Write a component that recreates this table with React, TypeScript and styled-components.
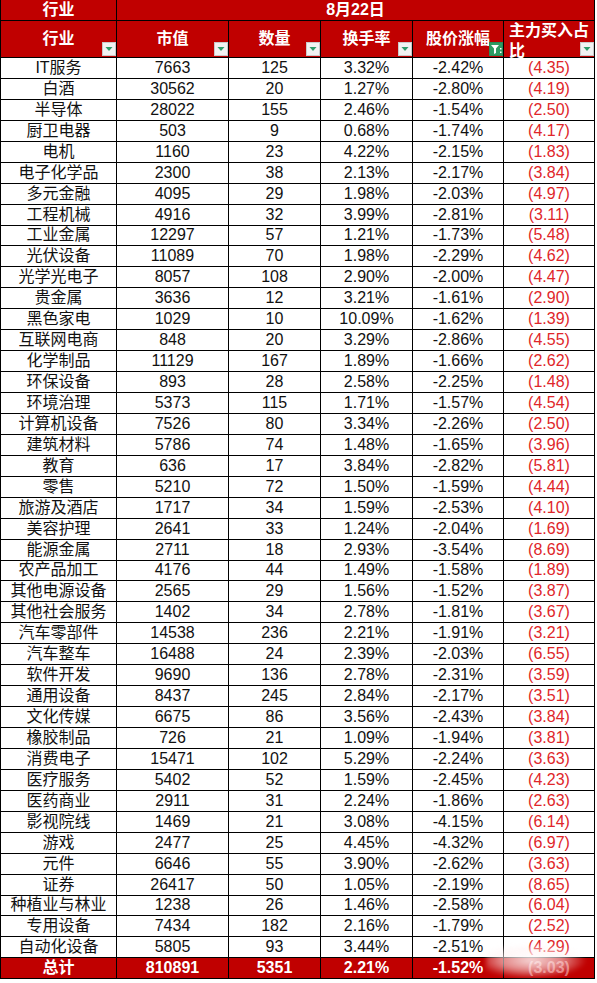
import React from "react";
import styled, { createGlobalStyle } from "styled-components";

const GlobalStyle = createGlobalStyle`
  html, body { margin: 0; padding: 0; background: #ffffff; }
  body { font-family: "Liberation Sans", "Noto Sans CJK SC", Arial, sans-serif; }
`;

const RED = "#c00000";

const Wrapper = styled.div`
  position: relative;
  width: 597px;
`;

const Sheet = styled.div`
  display: grid;
  grid-template-columns: 115px 111px 91px 91px 90px 90px;
  grid-template-rows: 20px 36px;
  grid-auto-rows: 19.95px;
  gap: 1px;
  padding: 0 1px 1px 1px;
  background: #000000;
  width: fit-content;
`;

const TitleCell = styled.div<{ $span?: number }>`
  grid-column: span ${(p) => p.$span ?? 1};
  background: ${RED};
  color: #ffffff;
  font-weight: bold;
  font-size: 16px;
  display: flex;
  align-items: center;
  justify-content: center;
  line-height: 1;
`;

const HeadCell = styled.div`
  position: relative;
  background: ${RED};
  color: #ffffff;
  font-weight: bold;
  font-size: 16px;
  display: flex;
  align-items: center;
  justify-content: center;
  padding-bottom: 2px;
  box-sizing: border-box;
`;

const HeadLabel = styled.span<{ $wrap?: boolean }>`
  display: block;
  line-height: ${(p) => (p.$wrap ? "20px" : "19px")};
  text-align: ${(p) => (p.$wrap ? "left" : "center")};
  align-self: ${(p) => (p.$wrap ? "flex-start" : "center")};
  width: ${(p) => (p.$wrap ? "100%" : "auto")};
  padding: ${(p) => (p.$wrap ? "0 4px 0 5px" : "0")};
  box-sizing: border-box;
`;

const FilterBtn = styled.span<{ $active?: boolean }>`
  position: absolute;
  right: 0;
  bottom: 1px;
  width: 14px;
  height: 14px;
  box-sizing: border-box;
  background: ${(p) => (p.$active ? "#2e9b63" : "#f2f2f2")};
  border: 1px solid ${(p) => (p.$active ? "#2a8a58" : "#c9c9c9")};
  display: flex;
  align-items: center;
  justify-content: center;
`;

const Cell = styled.div<{ $neg?: boolean }>`
  background: #ffffff;
  color: ${(p) => (p.$neg ? "#e0262a" : "#111111")};
  font-size: 16px;
  display: flex;
  align-items: center;
  justify-content: center;
  line-height: 1;
  white-space: nowrap;
`;

const TotalCell = styled.div<{ $faint?: boolean }>`
  background: ${RED};
  color: ${(p) => (p.$faint ? "rgba(255,200,200,0.55)" : "#ffffff")};
  font-weight: bold;
  font-size: 16px;
  display: flex;
  align-items: center;
  justify-content: center;
  line-height: 1;
  white-space: nowrap;
`;

const Watermark = styled.div`
  position: absolute;
  left: 486px;
  top: 946px;
  width: 100px;
  height: 32px;
  background: radial-gradient(
    ellipse at 45% 45%,
    rgba(255, 255, 255, 0.85) 0%,
    rgba(255, 240, 240, 0.55) 40%,
    rgba(255, 255, 255, 0) 72%
  );
  filter: blur(2px);
  pointer-events: none;
`;

const Arrow = () => (
  <svg width="10" height="8" viewBox="0 0 10 8">
    <polygon points="1.5,2 8.5,2 5,6" fill="#2e9c6a" />
  </svg>
);

const Funnel = () => (
  <svg width="12" height="12" viewBox="0 0 12 12">
    <path d="M1 2 H9 L6 5.5 V10 L4 11 V5.5 Z" fill="#ffffff" />
    <rect x="10" y="5" width="1.5" height="1.5" fill="#ffffff" />
    <rect x="10" y="8.5" width="1.5" height="1.5" fill="#ffffff" />
  </svg>
);

type Row = [string, number, number, string, string, string];

const rows: Row[] = [
  ["IT服务", 7663, 125, "3.32%", "-2.42%", "(4.35)"],
  ["白酒", 30562, 20, "1.27%", "-2.80%", "(4.19)"],
  ["半导体", 28022, 155, "2.46%", "-1.54%", "(2.50)"],
  ["厨卫电器", 503, 9, "0.68%", "-1.74%", "(4.17)"],
  ["电机", 1160, 23, "4.22%", "-2.15%", "(1.83)"],
  ["电子化学品", 2300, 38, "2.13%", "-2.17%", "(3.84)"],
  ["多元金融", 4095, 29, "1.98%", "-2.03%", "(4.97)"],
  ["工程机械", 4916, 32, "3.99%", "-2.81%", "(3.11)"],
  ["工业金属", 12297, 57, "1.21%", "-1.73%", "(5.48)"],
  ["光伏设备", 11089, 70, "1.98%", "-2.29%", "(4.62)"],
  ["光学光电子", 8057, 108, "2.90%", "-2.00%", "(4.47)"],
  ["贵金属", 3636, 12, "3.21%", "-1.61%", "(2.90)"],
  ["黑色家电", 1029, 10, "10.09%", "-1.62%", "(1.39)"],
  ["互联网电商", 848, 20, "3.29%", "-2.86%", "(4.55)"],
  ["化学制品", 11129, 167, "1.89%", "-1.66%", "(2.62)"],
  ["环保设备", 893, 28, "2.58%", "-2.25%", "(1.48)"],
  ["环境治理", 5373, 115, "1.71%", "-1.57%", "(4.54)"],
  ["计算机设备", 7526, 80, "3.34%", "-2.26%", "(2.50)"],
  ["建筑材料", 5786, 74, "1.48%", "-1.65%", "(3.96)"],
  ["教育", 636, 17, "3.84%", "-2.82%", "(5.81)"],
  ["零售", 5210, 72, "1.50%", "-1.59%", "(4.44)"],
  ["旅游及酒店", 1717, 34, "1.59%", "-2.53%", "(4.10)"],
  ["美容护理", 2641, 33, "1.24%", "-2.04%", "(1.69)"],
  ["能源金属", 2711, 18, "2.93%", "-3.54%", "(8.69)"],
  ["农产品加工", 4176, 44, "1.49%", "-1.58%", "(1.89)"],
  ["其他电源设备", 2565, 29, "1.56%", "-1.52%", "(3.87)"],
  ["其他社会服务", 1402, 34, "2.78%", "-1.81%", "(3.67)"],
  ["汽车零部件", 14538, 236, "2.21%", "-1.91%", "(3.21)"],
  ["汽车整车", 16488, 24, "2.39%", "-2.03%", "(6.55)"],
  ["软件开发", 9690, 136, "2.78%", "-2.31%", "(3.59)"],
  ["通用设备", 8437, 245, "2.84%", "-2.17%", "(3.51)"],
  ["文化传媒", 6675, 86, "3.56%", "-2.43%", "(3.84)"],
  ["橡胶制品", 726, 21, "1.09%", "-1.94%", "(3.81)"],
  ["消费电子", 15471, 102, "5.29%", "-2.24%", "(3.63)"],
  ["医疗服务", 5402, 52, "1.59%", "-2.45%", "(4.23)"],
  ["医药商业", 2911, 31, "2.24%", "-1.86%", "(2.63)"],
  ["影视院线", 1469, 21, "3.08%", "-4.15%", "(6.14)"],
  ["游戏", 2477, 25, "4.45%", "-4.32%", "(6.97)"],
  ["元件", 6646, 55, "3.90%", "-2.62%", "(3.63)"],
  ["证券", 26417, 50, "1.05%", "-2.19%", "(8.65)"],
  ["种植业与林业", 1238, 26, "1.46%", "-2.58%", "(6.04)"],
  ["专用设备", 7434, 182, "2.16%", "-1.79%", "(2.52)"],
  ["自动化设备", 5805, 93, "3.44%", "-2.51%", "(4.29)"],
];

const headers: { label: string; active?: boolean; wrap?: boolean }[] = [
  { label: "行业" },
  { label: "市值" },
  { label: "数量" },
  { label: "换手率" },
  { label: "股价涨幅", active: true },
  { label: "主力买入占比", wrap: true },
];

export default function App() {
  return (
    <Wrapper>
      <GlobalStyle />
      <Sheet>
        <TitleCell>行业</TitleCell>
        <TitleCell $span={5}>8月22日</TitleCell>
        {headers.map((h) => (
          <HeadCell key={h.label}>
            <HeadLabel $wrap={h.wrap}>{h.label}</HeadLabel>
            <FilterBtn $active={h.active}>{h.active ? <Funnel /> : <Arrow />}</FilterBtn>
          </HeadCell>
        ))}
        {rows.map((r) => (
          <React.Fragment key={r[0]}>
            <Cell>{r[0]}</Cell>
            <Cell>{r[1]}</Cell>
            <Cell>{r[2]}</Cell>
            <Cell>{r[3]}</Cell>
            <Cell>{r[4]}</Cell>
            <Cell $neg>{r[5]}</Cell>
          </React.Fragment>
        ))}
        <TotalCell>总计</TotalCell>
        <TotalCell>810891</TotalCell>
        <TotalCell>5351</TotalCell>
        <TotalCell>2.21%</TotalCell>
        <TotalCell>-1.52%</TotalCell>
        <TotalCell $faint>(3.03)</TotalCell>
      </Sheet>
      <Watermark />
    </Wrapper>
  );
}
